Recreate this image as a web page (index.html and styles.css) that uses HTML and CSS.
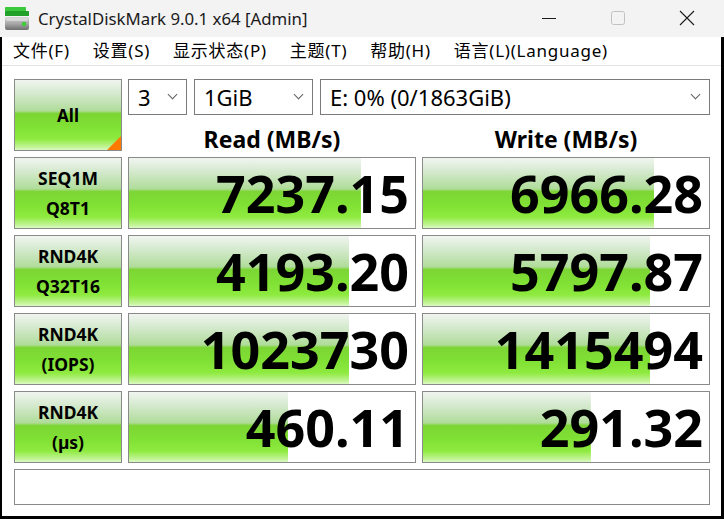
FILE: index.html
```html
<!DOCTYPE html>
<html lang="zh-CN">
<head>
<meta charset="utf-8">
<title>CrystalDiskMark 9.0.1 x64 [Admin]</title>
<link rel="stylesheet" href="styles.css">
</head>
<body>
<div class="titlebar">
  <svg class="appicon" width="24" height="24" viewBox="0 0 24 24">
    <defs>
      <linearGradient id="body" x1="0" y1="0" x2="0" y2="1">
        <stop offset="0" stop-color="#d4d4d4"/>
        <stop offset="0.5" stop-color="#a8a8a8"/>
        <stop offset="1" stop-color="#6e6e6e"/>
      </linearGradient>
    </defs>
    <rect x="0" y="0" width="21" height="4" rx="0.5" fill="#3cc83c"/>
    <rect x="0" y="4" width="24" height="5" rx="0.5" fill="#22a02a"/>
    <rect x="0" y="10" width="24" height="13" rx="2" fill="url(#body)"/>
    <rect x="1" y="11" width="22" height="3" rx="1" fill="#e6e6e6" opacity="0.6"/>
    <rect x="17" y="15" width="4" height="4" fill="#3ccc3c"/>
  </svg>
  <span class="title">CrystalDiskMark 9.0.1 x64 [Admin]</span>
  <div class="controls">
    <span class="ctl"><svg width="16" height="16" viewBox="0 0 16 16"><path d="M1 8.5h14" stroke="#1b1b1b" stroke-width="1"/></svg></span>
    <span class="ctl"><svg width="16" height="16" viewBox="0 0 16 16"><rect x="1.5" y="1.5" width="13" height="13" rx="2" fill="none" stroke="#c2c2c2" stroke-width="1"/></svg></span>
    <span class="ctl"><svg width="16" height="16" viewBox="0 0 16 16"><path d="M1 1L15 15M15 1L1 15" stroke="#1b1b1b" stroke-width="1.1"/></svg></span>
  </div>
</div>
<div class="frame">
  <nav class="menubar">
    <span class="mi">文件(F)</span>
    <span class="mi">设置(S)</span>
    <span class="mi">显示状态(P)</span>
    <span class="mi">主题(T)</span>
    <span class="mi">帮助(H)</span>
    <span class="mi">语言(L)(Language)</span>
  </nav>
  <main class="panel">
    <div class="grid">
      <div class="all">All<span class="corner"></span></div>
      <div class="top">
        <div class="combos">
          <div class="combo c-count">3<span class="chev"></span></div>
          <div class="combo c-size">1GiB<span class="chev"></span></div>
          <div class="combo c-drive">E: 0% (0/1863GiB)<span class="chev"></span></div>
        </div>
        <div class="heads">
          <div class="head">Read (MB/s)</div>
          <div class="head">Write (MB/s)</div>
        </div>
      </div>

      <div class="label">SEQ1M<br>Q8T1</div>
      <div class="val" style="--w:81.1%">7237.15</div>
      <div class="val" style="--w:80.8%">6966.28</div>

      <div class="label">RND4K<br>Q32T16</div>
      <div class="val" style="--w:77.0%">4193.20</div>
      <div class="val" style="--w:79.4%">5797.87</div>

      <div class="label">RND4K<br>(IOPS)</div>
      <div class="val" style="--w:77.0%">1023730</div>
      <div class="val" style="--w:79.4%">1415494</div>

      <div class="label">RND4K<br>(µs)</div>
      <div class="val" style="--w:55.6%">460.11</div>
      <div class="val" style="--w:58.7%">291.32</div>

      <div class="comment"></div>
    </div>
  </main>
</div>
</body>
</html>
```
FILE: styles.css
```css
html, body {
  margin: 0;
  padding: 0;
  background: #ffffff;
}
body {
  width: 724px;
  height: 519px;
  overflow: hidden;
  font-family: "Noto Sans", "Noto Sans CJK SC", sans-serif;
  color: #000;
}

.titlebar {
  height: 37px;
  background: #f3f3f3;
  display: flex;
  align-items: center;
  box-sizing: border-box;
  padding-left: 5px;
  padding-right: 3px;
}
.appicon {
  display: block;
  margin-top: 1px;
}
.title {
  margin-left: 9px;
  font-size: 16.8px;
  color: #1a1a1a;
  margin-top: -1px;
}
.controls {
  margin-left: auto;
  display: flex;
  height: 37px;
}
.ctl {
  width: 69px;
  display: flex;
  align-items: center;
  justify-content: center;
}
.ctl svg { display: block; margin-top: -1px; }

.frame {
  height: 482px;
  box-sizing: border-box;
  border-left: 2px solid #000;
  border-right: 3px solid #000;
  border-bottom: 3px solid #000;
  display: flex;
  flex-direction: column;
}

.menubar {
  height: 29px;
  box-sizing: border-box;
  border-bottom: 1px solid #e3e3e3;
  display: flex;
  align-items: center;
  padding-left: 11px;
  gap: 23px;
  font-family: "Noto Sans", "Noto Sans CJK SC", sans-serif;
  font-size: 17px;
  background: #fff;
}
.mi { line-height: 28px; letter-spacing: 0.75px; }

.panel {
  flex: 1;
  padding: 13px 11px 0 12px;
  background: #fff;
}

.grid {
  display: grid;
  grid-template-columns: 108px 288px 288px;
  grid-template-rows: 72px repeat(4, 72px) 36px;
  column-gap: 6px;
  row-gap: 6px;
}

.all, .label, .val {
  box-sizing: border-box;
  border: 1px solid #8a8a8a;
}
.all, .label {
  background: linear-gradient(to bottom,
    #f1f5f0 0%, #d6ead0 18%, #b0dc9a 44%, #7cd534 48%,
    #80e034 66%, #8eea3e 84%, #c4f49a 96%, #dcfac4 100%);
}
.all {
  position: relative;
  display: flex;
  align-items: center;
  justify-content: center;
  font-weight: 700;
  font-size: 17px;
}
.corner {
  position: absolute;
  right: 0;
  bottom: 0;
  width: 0;
  height: 0;
  border-style: solid;
  border-width: 0 0 14px 14px;
  border-color: transparent transparent #ff7a00 transparent;
}

.top {
  grid-column: 2 / 4;
  display: flex;
  flex-direction: column;
}
.combos {
  height: 36px;
  display: flex;
  gap: 7px;
}
.combo {
  position: relative;
  box-sizing: border-box;
  height: 36px;
  border: 1px solid #7a7a7a;
  background: #fff;
  font-size: 22px;
  line-height: 34px;
  padding-left: 9px;
}
.c-count { width: 59px; }
.c-size { width: 119px; }
.c-drive { flex: 1; }
.chev {
  position: absolute;
  right: 10px;
  top: 11px;
  width: 6px;
  height: 6px;
  border-right: 1px solid #606060;
  border-bottom: 1px solid #606060;
  transform: rotate(45deg);
}

.heads {
  display: flex;
  gap: 6px;
}
.head {
  width: 288px;
  text-align: center;
  font-weight: 700;
  font-size: 23px;
  line-height: 23px;
  padding-top: 13px;
}

.label {
  display: flex;
  align-items: center;
  justify-content: center;
  text-align: center;
  font-weight: 700;
  font-size: 17.5px;
  line-height: 30px;
}

.val {
  background-color: #fff;
  background-image: linear-gradient(to bottom,
    #f1f5f0 0%, #d6ead0 18%, #b0dc9a 44%, #7cd534 48%,
    #80e034 66%, #8eea3e 84%, #c4f49a 96%, #dcfac4 100%);
  background-repeat: no-repeat;
  background-size: var(--w) 100%;
  text-align: right;
  padding-right: 6px;
  font-weight: 700;
  font-size: 52px;
  line-height: 70px;
}

.comment {
  grid-column: 1 / 4;
  box-sizing: border-box;
  border: 1px solid #8a8a8a;
  background: #fff;
}
```
